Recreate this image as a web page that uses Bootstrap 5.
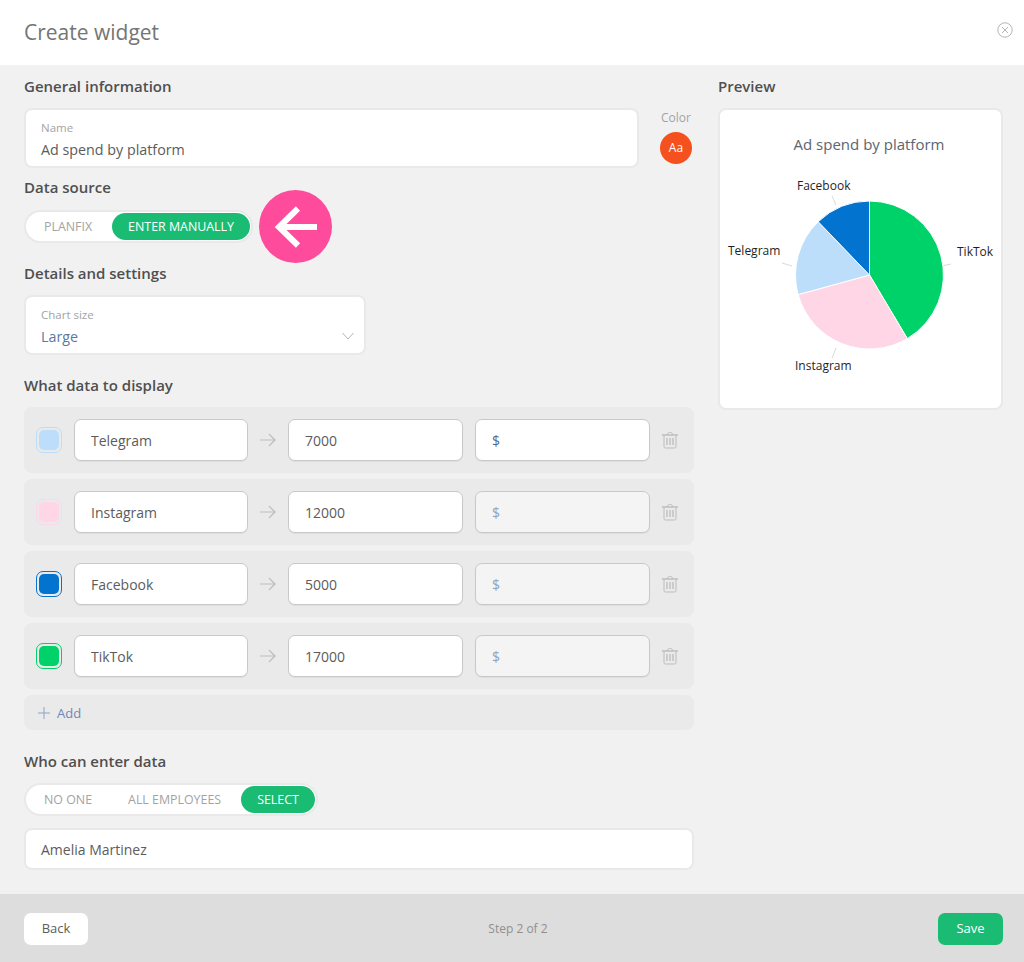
<!DOCTYPE html>
<html lang="en">
<head>
    <meta charset="UTF-8">
    <meta name="viewport" content="width=device-width, initial-scale=1.0">
    <title>Create widget</title>
    <link href="https://cdn.jsdelivr.net/npm/bootstrap@5.3.0/dist/css/bootstrap.min.css" rel="stylesheet">
    <style>
        body { font-family: "Open Sans", "Noto Sans", sans-serif; background: #f1f1f1; color: #5c5c5c; font-size: 14px; }
        .page { height: 962px; }
        .top-bar { height: 65px; padding: 0 11px 0 24px; }
        .top-bar h1 { font-size: 21px; font-weight: 400; color: #757575; margin: 0; }
        .close-x { margin-bottom: 5px; }
        .content { padding: 11px 21px 0 24px; gap: 24px; }
        .col-form { width: 670px; }
        .col-preview { width: 285px; }
        .section-title { font-size: 15px; line-height: 20px; font-weight: 600; color: #4f4f4f; margin-bottom: 12px; }
        .mt-section { margin-top: 20px; }
        .field { background: #fff; border: 2px solid #e9e9e9; border-radius: 8px; }
        .field-big { height: 60px; padding: 10px 15px 0; }
        .field-label { font-size: 11.500px; line-height: 16px; color: #a3a3a3; }
        .field-value { font-size: 14.300px; line-height: 24px; margin-top: 2px; color: #5c5c5c; }
        .color-pick { width: 32px; margin-right: 2px; }
        .color-pick small { font-size: 12px; color: #a3a3a3; line-height: 20px; white-space: nowrap; }
        .color-dot { width: 32px; height: 32px; background: #f4511e; font-size: 12px; margin-top: 4px; }
        .segment { background: #fff; border: 2px solid #e9e9e9; border-radius: 17px; padding: 1px 1px 1px 2px; height: 33px; gap: 4px; }
        .segment span { font-size: 12.400px; line-height: 27px; height: 27px; padding: 0 16px; color: #a3a3a3; border-radius: 14px; }
        .segment span.active { background: #1abc74; color: #fff; }
        .pink-arrow { left: 235px; top: -20px; width: 73px; height: 73px; background: #ff4b9b; }
        .select-box { width: 342px; }
        .select-value { color: #5d77a3; }
        .data-row { background: #eaeaea; border-radius: 8px; height: 66px; padding: 0 16px 0 12px; margin-bottom: 6px; }
        .swatch { width: 26px; height: 26px; border-radius: 7px; border: 1px solid; padding: 2px; margin-right: 12px; }
        .swatch i { display: block; width: 100%; height: 100%; border-radius: 5px; }
        .cell { width: 175px; height: 42px; background: #fff; border: 1px solid #c8c8c8; border-radius: 7px; padding: 0 16px; font-size: 14px; line-height: 42px; color: #5c5c5c; box-shadow: 0 1px 1px rgba(0,0,0,.05); }
        .cell.name { width: 174px; }
        .cell.off { background: #f4f4f4; color: #8ea3c2; }
        .cell.cur { color: #4e6b9c; }
        .arrow-gap { width: 40px; }
        .trash { margin-left: 12px; }
        .add-row { background: #eaeaea; border-radius: 8px; height: 35px; padding: 0 14px; color: #6f88b5; font-size: 13px; gap: 7px; }
        .add-row span { padding-top: 2px; }
        .person { height: 42px; line-height: 40px; padding: 0 15px; }
        .preview-box { background: #fff; border: 2px solid #e9e9e9; border-radius: 8px; height: 302px; }
        .footer-bar { height: 68px; background: #ddd; padding: 2px 21px 0 24px; }
        .btn-back, .btn-save { height: 32px; font-size: 13px; line-height: 18px; padding: 0 0 2px; border-radius: 7px; border: 1px solid transparent; }
        .btn-back { width: 64px; background: #fff; color: #5c5c5c; }
        .btn-save { width: 65px; background: #1abc74; color: #fff; }
        .step { font-size: 12px; color: #8f8f8f; left: 0; right: 0; padding-left: 12px; }
    </style>
</head>
<body>
<div class="page d-flex flex-column">
    <header class="top-bar bg-white d-flex align-items-center justify-content-between">
        <h1>Create widget</h1>
        <svg class="close-x" width="16" height="16" viewBox="0 0 16 16" fill="none" stroke="#b5b5b5" aria-hidden="true">
            <circle cx="8" cy="8" r="7.200"/>
            <path d="M5 5l6 6M11 5l-6 6"/>
        </svg>
    </header>

    <div class="content d-flex flex-grow-1">
        <div class="col-form">
            <div class="section-title">General information</div>
            <div class="d-flex justify-content-between">
                <div class="field field-big" style="width: 615px">
                    <div class="field-label">Name</div>
                    <div class="field-value">Ad spend by platform</div>
                </div>
                <div class="color-pick text-center">
                    <small class="d-block">Color</small>
                    <div class="color-dot rounded-circle text-white d-flex align-items-center justify-content-center">Aa</div>
                </div>
            </div>

            <div class="section-title" style="margin-top: 9px; margin-bottom: 13px">Data source</div>
            <div class="position-relative">
                <div class="segment d-inline-flex">
                    <span>PLANFIX</span>
                    <span class="active">ENTER MANUALLY</span>
                </div>
                <div class="pink-arrow position-absolute rounded-circle d-flex align-items-center justify-content-center">
                    <svg width="44" height="44" viewBox="0 0 44 44" fill="none" stroke="#fff" stroke-width="6" aria-hidden="true">
                        <path d="M43 22H5M24 3.500L5 22L24 40.500"/>
                    </svg>
                </div>
            </div>

            <div class="section-title mt-section">Details and settings</div>
            <div class="field field-big select-box position-relative">
                <div class="field-label">Chart size</div>
                <div class="field-value select-value">Large</div>
                <svg class="position-absolute" style="right: 10px; top: 35px" width="12" height="8" viewBox="0 0 12 8" fill="none" stroke="#b5b5b5" aria-hidden="true">
                    <path d="M.5 1l5.500 6l5.500-6"/>
                </svg>
            </div>

            <div class="section-title mt-section">What data to display</div>
            <div id="rows"></div>
            <div class="add-row d-flex align-items-center">
                <svg width="12" height="12" viewBox="0 0 12 12" stroke="#8ea3c8" aria-hidden="true"><path d="M6 0v12M0 6h12"/></svg>
                <span>Add</span>
            </div>

            <div class="section-title" style="margin-top: 21px">Who can enter data</div>
            <div class="segment d-inline-flex">
                <span>NO ONE</span>
                <span>ALL EMPLOYEES</span>
                <span class="active">SELECT</span>
            </div>
            <div class="field person" style="margin-top: 12px">Amelia Martinez</div>
        </div>

        <div class="col-preview">
            <div class="section-title">Preview</div>
            <div class="preview-box">
                <svg width="281" height="298" viewBox="0 0 281 298" font-family="Open Sans, sans-serif" aria-label="Pie chart">
                    <text x="149" y="40" text-anchor="middle" font-size="15" fill="#5c6570">Ad spend by platform</text>
                    <g stroke="#d9d9d9" fill="none">
                        <path d="M222 156l9-2M72 156l-10-3M116 95l-4-9M116 238l-4 10"/>
                    </g>
                    <g stroke="#fff" stroke-width="1" transform="translate(.5 0)">
                        <path fill="#00d26a" d="M149 165V91A74 74 0 0 1 186.800 228.600Z"/>
                        <path fill="#ffd6e6" d="M149 165L186.800 228.600A74 74 0 0 1 77.650 184.600Z"/>
                        <path fill="#bddefa" d="M149 165L77.650 184.600A74 74 0 0 1 97.700 111.700Z"/>
                        <path fill="#0373d0" d="M149 165L97.700 111.700A74 74 0 0 1 149 91Z"/>
                    </g>
                    <g font-size="12" fill="#1f1f1f">
                        <text x="77" y="80">Facebook</text>
                        <text x="8" y="145">Telegram</text>
                        <text x="237" y="146">TikTok</text>
                        <text x="75" y="260">Instagram</text>
                    </g>
                </svg>
            </div>
        </div>
    </div>

    <footer class="footer-bar d-flex align-items-center justify-content-between position-relative">
        <button class="btn btn-back" type="button">Back</button>
        <span class="step position-absolute text-center">Step 2 of 2</span>
        <button class="btn btn-save position-relative" type="button">Save</button>
    </footer>
</div>

<script>
    const datos = [
        { name: "Telegram", value: "7000", color: "#bddefa", on: true },
        { name: "Instagram", value: "12000", color: "#ffd6e6" },
        { name: "Facebook", value: "5000", color: "#0373d0" },
        { name: "TikTok", value: "17000", color: "#00d26a" },
    ];
    const flecha = '<svg class="d-block mx-auto" width="16" height="14" viewBox="0 0 16 14" fill="none" stroke="#bdbdbd" stroke-width="1.200"><path d="M0 7h15M9 1l6 6l-6 6"/></svg>';
    const papelera = '<svg class="trash" width="16" height="17" viewBox="0 0 16 17" fill="none" stroke="#bcbcbc"><path stroke-width="1.500" d="M0 3h16"/><path d="M5.500 2.500c0-3 5-3 5 0M2 3.500v11c0 1 .5 1.500 1.500 1.500h9c1 0 1.500-.5 1.500-1.500v-11"/><path stroke-width="1.300" d="M5 6v7M8 6v7M11 6v7"/></svg>';
    document.getElementById("rows").innerHTML = datos.map(d => `
        <div class="data-row d-flex align-items-center">
            <div class="swatch flex-shrink-0" style="border-color: ${d.color}"><i style="background: ${d.color}"></i></div>
            <div class="cell name">${d.name}</div>
            <div class="arrow-gap">${flecha}</div>
            <div class="cell">${d.value}</div>
            <div style="width: 12px"></div>
            <div class="cell ${d.on ? "cur" : "off"}">$</div>
            ${papelera}
        </div>`).join("");
</script>
<script src="https://cdn.jsdelivr.net/npm/bootstrap@5.3.0/dist/js/bootstrap.bundle.min.js"></script>
</body>
</html>
